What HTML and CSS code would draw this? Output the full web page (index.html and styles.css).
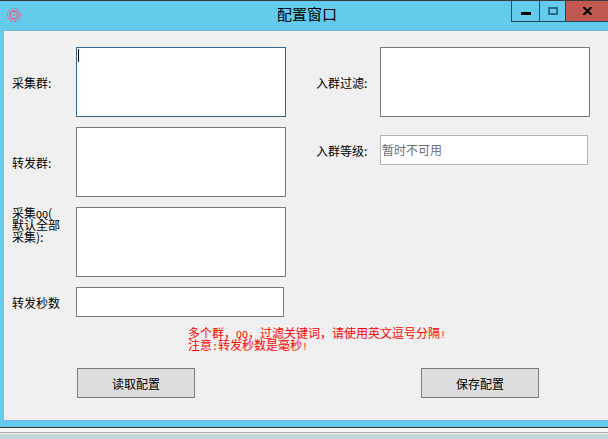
FILE: index.html
```html
<!DOCTYPE html>
<html lang="zh-CN">
<head>
<meta charset="utf-8">
<title>配置窗口</title>
<link rel="stylesheet" href="styles.css">
</head>
<body>
<div class="window">
  <header class="titlebar">
    <svg class="app-icon" width="16" height="16" viewBox="0 0 16 16" fill="none" stroke="#f4607f">
      <circle cx="8" cy="8" r="6.6" stroke-dasharray="3 1"/>
      <circle cx="8" cy="8" r="4" stroke-width="1.6"/>
      <circle cx="8" cy="8" r="1" fill="#f4607f" stroke="none"/>
    </svg>
    <h1 class="title">配置窗口</h1>
    <div class="controls">
      <div class="ctl ctl-min"><span class="min-glyph"></span></div>
      <div class="ctl ctl-max"><span class="max-glyph"></span></div>
      <div class="ctl ctl-close">
        <svg width="9" height="8" viewBox="0 0 9 8" stroke="#000" stroke-width="2" fill="none"><path d="M0.5 0L8.5 8M8.5 0L0.5 8"/></svg>
      </div>
    </div>
  </header>
  <div class="client-wrap">
    <main class="client">
      <div class="form">
        <section class="col col-left">
          <div class="row"><label class="lbl">采集群:</label><div class="box box-focus"><span class="caret"></span></div></div>
          <div class="row"><label class="lbl">转发群:</label><div class="box"></div></div>
          <div class="row"><label class="lbl lbl-wrap"><span class="line">采集<span class="mono">QQ</span>(</span><span class="line">默认全部</span><span class="line">采集):</span></label><div class="box"></div></div>
          <div class="row row-short"><label class="lbl">转发秒数</label><div class="box box-short"></div></div>
        </section>
        <section class="col col-right">
          <div class="row"><label class="lbl">入群过滤:</label><div class="box"></div></div>
          <div class="row row-short"><label class="lbl">入群等级:</label><div class="box box-short box-disabled">暂时不可用</div></div>
        </section>
      </div>
      <div class="hint">
        <p class="line">多个群，<span class="mono">QQ</span>，过滤关键词，请使用英文逗号分隔<span class="mono">!</span></p>
        <p class="line">注意<span class="mono">:</span>转发秒数是毫秒<span class="mono">!</span></p>
      </div>
      <div class="actions">
        <button class="btn">读取配置</button>
        <button class="btn">保存配置</button>
      </div>
    </main>
  </div>
</div>
<div class="below">
  <div class="stripe-white"></div>
  <div class="stripe-gray"></div>
  <div class="stripe-white2"></div>
</div>
</body>
</html>
```
FILE: styles.css
```css
* { box-sizing: border-box; }
html, body { margin: 0; padding: 0; }
body {
  width: 608px;
  height: 439px;
  overflow: hidden;
  background: #c5d5db;
  font-family: "Noto Sans CJK SC", "Liberation Sans", sans-serif;
  font-size: 12px;
  color: #000;
}
.mono { font-family: "Liberation Mono", monospace; font-size: 10px; line-height: 1; }
.line { display: block; height: 12px; line-height: 12px; margin: 0; white-space: nowrap; }
.window {
  height: 428px;
  display: flex;
  flex-direction: column;
  background: #65cbed;
  border-top: 1px solid #3a3a3a;
  border-bottom: 1px solid #333;
}
.titlebar {
  height: 30px;
  position: relative;
  display: flex;
  align-items: flex-start;
  justify-content: center;
  flex: none;
  padding-left: 6px;
  border-bottom: 1px solid #7ab7d2;
}
.app-icon { position: absolute; left: 6px; top: 6px; }
.title {
  margin: 3px 0 0;
  font-size: 15px;
  font-weight: 400;
  line-height: 20px;
}
.controls {
  position: absolute;
  right: 0;
  top: 0;
  display: flex;
  height: 21px;
}
.ctl {
  height: 21px;
  display: flex;
  align-items: center;
  justify-content: center;
  border-bottom: 1px solid #1d4a5c;
  border-left: 1px solid #1d4a5c;
}
.ctl-min { width: 28px; }
.ctl-max { width: 26px; }
.ctl-close { width: 43px; background: #c05a50; }
.min-glyph { display: block; width: 10px; height: 3px; background: #000; margin-top: 4px; }
.max-glyph { display: block; width: 10px; height: 8px; border: 2px solid #2c6d8c; margin-top: -1px; }
.client-wrap { flex: 1; padding: 0 0 6px 4px; }
.client {
  height: 100%;
  background: #f0f0f0;
  padding: 16px 0 0 8px;
  border-bottom: 1px solid #7ab7d2;
}
.form { display: flex; gap: 30px; }
.col { display: flex; flex-direction: column; gap: 10px; width: 274px; }
.col-right { gap: 18px; }
.row { display: flex; align-items: center; height: 70px; }
.row-short { height: 30px; }
.lbl { width: 64px; flex: none; line-height: 12px; padding-top: 2px; }
.lbl-wrap { padding-top: 0; align-self: flex-start; }
.box {
  width: 210px;
  height: 100%;
  background: #fff;
  border: 1px solid #7a7a7a;
  position: relative;
}
.box-focus { border-color: #2f6792; }
.caret {
  position: absolute;
  left: 1px;
  top: 1px;
  width: 1px;
  height: 13px;
  background: #000;
}
.box-short { width: 208px; }
.box-disabled {
  border-color: #b0b4b6;
  color: #6d6d6d;
  line-height: 28px;
  padding-left: 1px;
}
.hint {
  margin: 10px 0 0 176px;
  color: #f00;
}
.actions {
  display: flex;
  gap: 226px;
  margin: 17px 0 0 65px;
}
.btn {
  width: 118px;
  height: 30px;
  padding: 0;
  background: #dddddd;
  border: 1px solid #7a7a7a;
  font: inherit;
  color: #000;
}
.below { height: 11px; }
.stripe-white { height: 4px; background: #f4f6f6; }
.stripe-gray { height: 1px; background: #a8a8a8; }
.stripe-white2 { height: 1px; background: #f4f6f6; }
```
